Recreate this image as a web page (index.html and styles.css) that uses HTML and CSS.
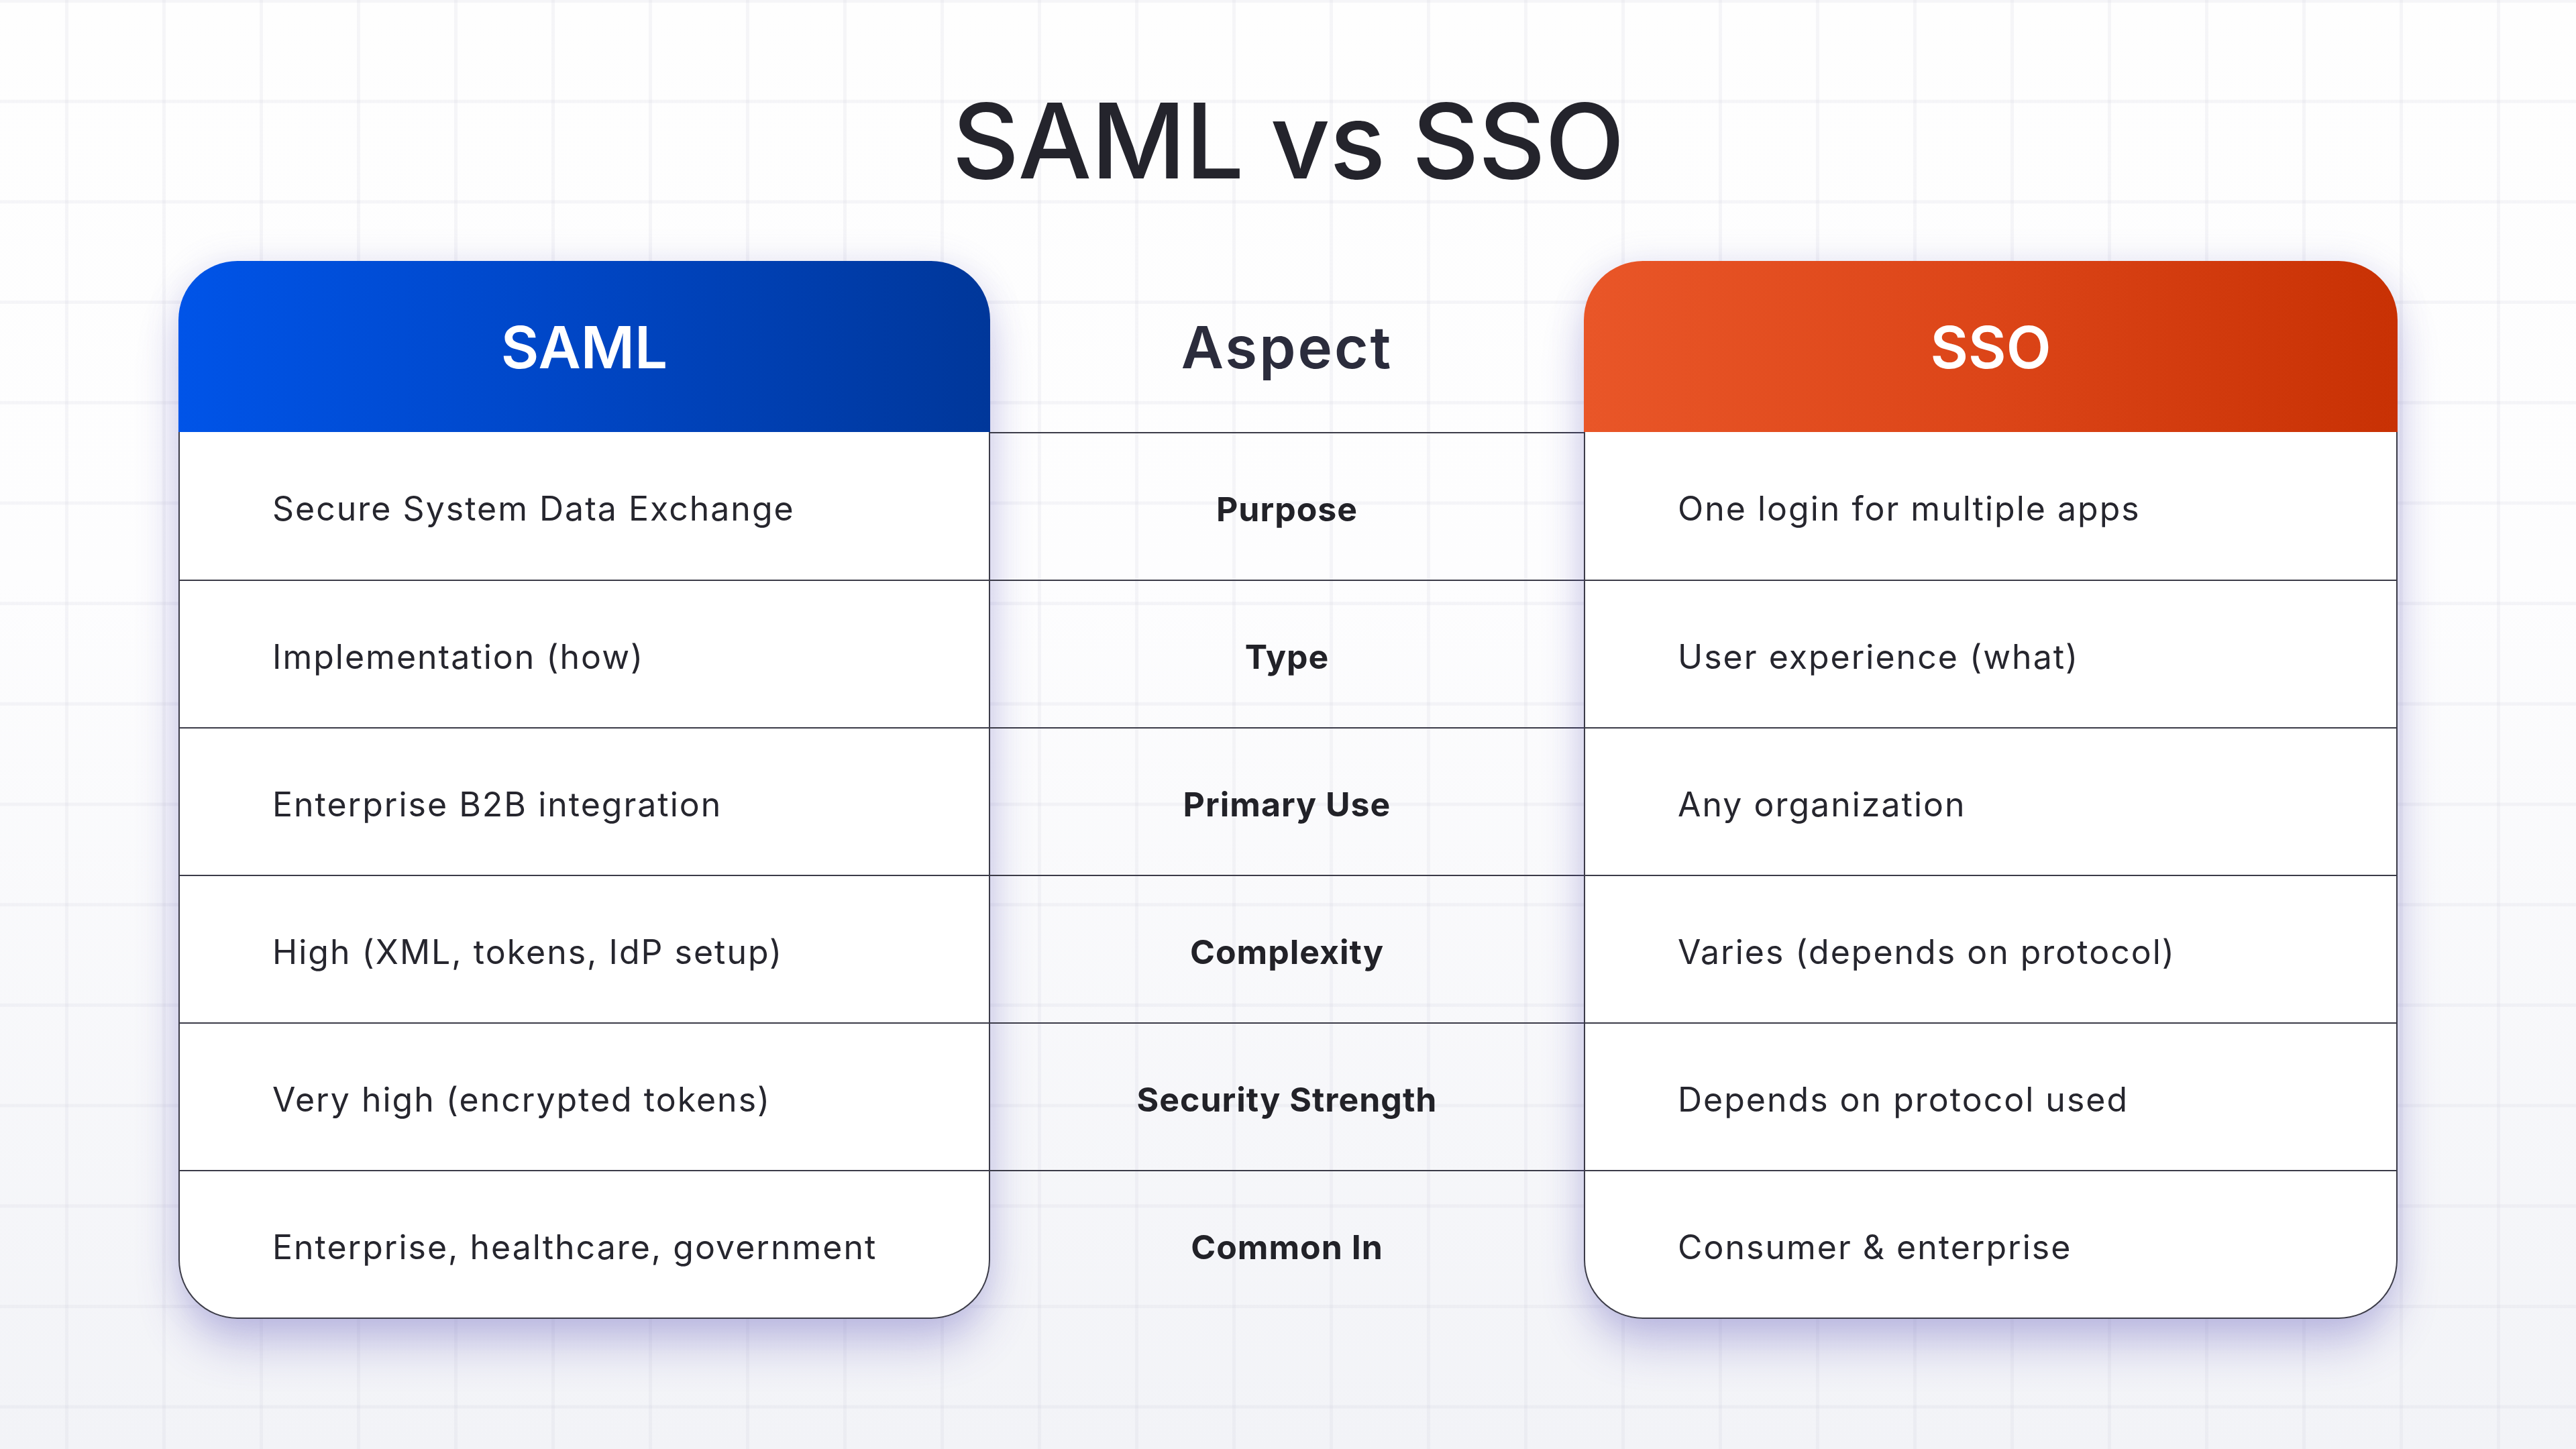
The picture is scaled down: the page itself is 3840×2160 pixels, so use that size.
FILE: index.html
```html
<!DOCTYPE html>
<html lang="en">
<head>
<meta charset="utf-8">
<title>SAML vs SSO</title>
<link rel="stylesheet" href="styles.css">
</head>
<body>
<main class="slide">
  <h1 class="title">SAML vs SSO</h1>
  <section class="compare">
    <div class="card card-saml">
      <div class="card-head">SAML</div>
      <div class="card-body">
        <div class="cell">Secure System Data Exchange</div>
        <div class="cell">Implementation (how)</div>
        <div class="cell">Enterprise B2B integration</div>
        <div class="cell">High (XML, tokens, IdP setup)</div>
        <div class="cell">Very high (encrypted tokens)</div>
        <div class="cell">Enterprise, healthcare, government</div>
      </div>
    </div>
    <div class="aspects">
      <div class="aspect-head">Aspect</div>
      <div class="aspect-cell">Purpose</div>
      <div class="aspect-cell">Type</div>
      <div class="aspect-cell">Primary Use</div>
      <div class="aspect-cell">Complexity</div>
      <div class="aspect-cell">Security Strength</div>
      <div class="aspect-cell">Common In</div>
    </div>
    <div class="card card-sso">
      <div class="card-head">SSO</div>
      <div class="card-body">
        <div class="cell">One login for multiple apps</div>
        <div class="cell">User experience (what)</div>
        <div class="cell">Any organization</div>
        <div class="cell">Varies (depends on protocol)</div>
        <div class="cell">Depends on protocol used</div>
        <div class="cell">Consumer &amp; enterprise</div>
      </div>
    </div>
  </section>
</main>
</body>
</html>
```

FILE: styles.css
```css
html, body {
  margin: 0;
  padding: 0;
}

body {
  width: 3840px;
  height: 2160px;
  overflow: hidden;
  font-family: Inter, "Open Sans", "Liberation Sans", sans-serif;
  background-color: #fafafc;
  background-image:
    linear-gradient(to right, rgba(200, 200, 216, 0.16) 5px, transparent 5px),
    linear-gradient(to bottom, rgba(200, 200, 216, 0.16) 5px, transparent 5px),
    linear-gradient(to bottom, #fefefe 0%, #fdfdfe 40%, #f2f3f7 100%);
  background-size: 145px 100%, 100% 149.7px, 100% 100%;
  background-position: 97px 0, 0 -1px, 0 0;
}

.slide {
  display: flex;
  flex-direction: column;
  align-items: center;
  padding-top: 132px;
}

.title {
  margin: 0;
  font-size: 155px;
  line-height: 1;
  font-weight: 500;
  color: #24242c;
  letter-spacing: -1px;
}

.compare {
  margin-top: 102px;
  display: grid;
  grid-template-columns: 1210px 885px 1213px;
}

.card {
  border-radius: 88px;
  box-shadow: 0 45px 70px -10px rgba(80, 70, 180, 0.32), 0 0 50px rgba(110, 110, 190, 0.16);
}

.card-head {
  height: 255px;
  border-radius: 88px 88px 0 0;
  display: flex;
  align-items: center;
  justify-content: center;
  padding-top: 2px;
  box-sizing: border-box;
  color: #ffffff;
  font-size: 87px;
  font-weight: 600;
}

.card-saml .card-head {
  background: linear-gradient(90deg, #0054e8 0%, #0047c8 45%, #00379a 100%);
}

.card-sso .card-head {
  background: linear-gradient(90deg, #e95628 0%, #dc4518 50%, #c83104 100%);
}

.card-body {
  background: #ffffff;
  border: 2px solid #3b3b48;
  border-top: none;
  border-radius: 0 0 88px 88px;
}

.cell {
  box-sizing: border-box;
  height: 220px;
  display: flex;
  align-items: center;
  padding-left: 138px;
  padding-top: 8px;
  font-size: 50px;
  letter-spacing: 2px;
  font-weight: 400;
  color: #26262e;
}

.cell + .cell {
  border-top: 2px solid #3b3b48;
}

.aspects {
  display: flex;
  flex-direction: column;
}

.aspect-head {
  height: 255px;
  box-sizing: border-box;
  padding-top: 2px;
  display: flex;
  align-items: center;
  justify-content: center;
  font-size: 87px;
  font-weight: 600;
  letter-spacing: 3px;
  color: #2b2c3c;
}

.aspect-cell {
  box-sizing: border-box;
  height: 220px;
  border-top: 2px solid #3b3b48;
  padding-top: 8px;
  display: flex;
  align-items: center;
  justify-content: center;
  font-size: 50px;
  letter-spacing: 1px;
  font-weight: 700;
  color: #222228;
}
```
